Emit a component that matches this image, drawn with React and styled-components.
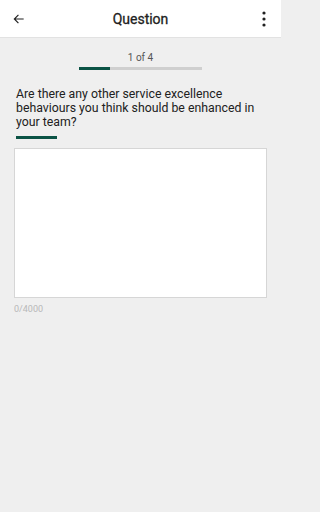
import styled, { createGlobalStyle } from 'styled-components';
import { useState } from 'react';

const GlobalStyle = createGlobalStyle`
  html, body {
    margin: 0;
    padding: 0;
    background: #efefef;
  }
  body {
    font-family: Roboto, 'Liberation Sans', sans-serif;
  }
  * {
    box-sizing: border-box;
  }
`;

const Page = styled.div`
  width: 281px;
  min-height: 512px;
  background: #efefef;
  display: flex;
  flex-direction: column;
`;

const Header = styled.header`
  height: 38px;
  background: #ffffff;
  border-bottom: 1px solid #e2e2e2;
  display: grid;
  grid-template-columns: 40px 1fr 40px;
  align-items: center;
`;

const IconButton = styled.button`
  background: transparent;
  border: none;
  padding: 0;
  height: 37px;
  display: flex;
  align-items: center;
  justify-content: ${({ align }) => align || 'center'};
  padding-left: ${({ align }) => (align === 'flex-start' ? '12px' : '0')};
  padding-right: ${({ align }) => (align === 'flex-end' ? '15px' : '0')};
  color: #212121;
`;

const Title = styled.h1`
  margin: 0;
  text-align: center;
  font-size: 14px;
  font-weight: 400;
  -webkit-text-stroke: 0.3px #212121;
  color: #212121;
`;

const Progress = styled.div`
  display: flex;
  flex-direction: column;
  align-items: center;
  padding-top: 14px;
  gap: 3px;
`;

const Step = styled.span`
  font-size: 10px;
  color: #555;
  line-height: 12px;
`;

const Track = styled.div`
  width: 123px;
  height: 3px;
  background: #cfcfcf;
`;

const Fill = styled.div`
  height: 100%;
  background: #0b5345;
`;

const Body = styled.main`
  padding: 17px 14px 0 14px;
`;

const QuestionText = styled.p`
  margin: 0 2px;
  font-size: 12.3px;
  line-height: 14px;
  color: #212121;
`;

const Accent = styled.div`
  margin: 7px 2px 0 2px;
  width: 41px;
  height: 3px;
  background: #0b5345;
`;

const Answer = styled.textarea`
  display: block;
  margin-top: 9px;
  width: 253px;
  height: 150px;
  border: 1px solid #d6d6d6;
  background: #fff;
  resize: none;
  outline: none;
  padding: 6px;
  font-family: inherit;
  font-size: 13px;
`;

const Counter = styled.div`
  margin-top: 6px;
  font-size: 9px;
  color: #b8b8b8;
`;

function BackIcon() {
  return (
    <svg width="14" height="14" viewBox="0 0 24 24" fill="none" stroke="#212121" strokeWidth="2">
      <path d="M20 12H4M11 5l-7 7 7 7" />
    </svg>
  );
}

function MoreIcon() {
  return (
    <svg width="4" height="16" viewBox="0 0 4 16" fill="#212121">
      <circle cx="2" cy="2" r="1.6" />
      <circle cx="2" cy="8" r="1.6" />
      <circle cx="2" cy="14" r="1.6" />
    </svg>
  );
}

export default function App() {
  const [text, setText] = useState('');
  const current = 1;
  const total = 4;

  return (
    <Page>
      <GlobalStyle />
      <Header>
        <IconButton align="flex-start" aria-label="Back">
          <BackIcon />
        </IconButton>
        <Title>Question</Title>
        <IconButton align="flex-end" aria-label="More">
          <MoreIcon />
        </IconButton>
      </Header>
      <Progress>
        <Step>{current} of {total}</Step>
        <Track>
          <Fill style={{ width: `${(current / total) * 100}%` }} />
        </Track>
      </Progress>
      <Body>
        <QuestionText>
          Are there any other service excellence behaviours you think should be enhanced in your team?
        </QuestionText>
        <Accent />
        <Answer value={text} maxLength={4000} onChange={(e) => setText(e.target.value)} />
        <Counter>{text.length}/4000</Counter>
      </Body>
    </Page>
  );
}
